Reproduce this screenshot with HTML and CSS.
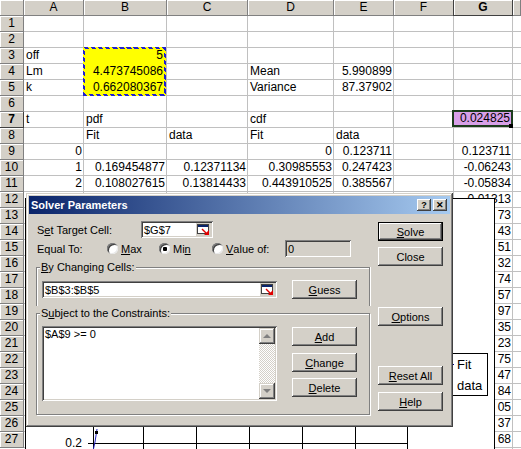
FILE: index.html
```html
<!DOCTYPE html>
<html lang="en">
<head>
    <meta charset="UTF-8" />
    <meta name="viewport" content="width=device-width, initial-scale=1.0" />
    <title>Solver Parameters</title>
    <link rel="stylesheet" href="styles.css">
</head>
<body>
<div class="page">
    <div class="sheet">
        <div class="ch"></div><div class="ch">A</div><div class="ch">B</div><div class="ch">C</div><div class="ch">D</div><div class="ch">E</div><div class="ch">F</div><div class="ch cur">G</div><div class="ch"></div>

        <div class="rh">1</div>
        <div class="rh">2</div>
        <div class="rh">3</div><div class="cell a">off</div>
        <div class="range">
            <div class="v">5</div>
            <div class="v">4.473745086</div>
            <div class="v">0.662080367</div>
        </div>
        <div class="rh">4</div><div class="cell a">Lm</div><div class="cell d">Mean</div><div class="cell e num">5.990899</div>
        <div class="rh">5</div><div class="cell a">k</div><div class="cell d">Variance</div><div class="cell e num">87.37902</div>
        <div class="rh">6</div>
        <div class="rh cur">7</div><div class="cell a">t</div><div class="cell b">pdf</div><div class="cell d">cdf</div><div class="cell g num active">0.024825</div>
        <div class="rh">8</div><div class="cell b">Fit</div><div class="cell c">data</div><div class="cell d">Fit</div><div class="cell e">data</div>
        <div class="rh">9</div><div class="cell a num">0</div><div class="cell d num">0</div><div class="cell e num">0.123711</div><div class="cell g num">0.123711</div>
        <div class="rh">10</div><div class="cell a num">1</div><div class="cell b num">0.169454877</div><div class="cell c num">0.12371134</div><div class="cell d num">0.30985553</div><div class="cell e num">0.247423</div><div class="cell g num">-0.06243</div>
        <div class="rh">11</div><div class="cell a num">2</div><div class="cell b num">0.108027615</div><div class="cell c num">0.13814433</div><div class="cell d num">0.443910525</div><div class="cell e num">0.385567</div><div class="cell g num">-0.05834</div>
        <div class="rh">12</div><div class="cell g num">-0.01313</div>
        <!-- only the tail of these values shows past the chart -->
        <div class="rh">13</div><div class="cell g num">73</div>
        <div class="rh">14</div><div class="cell g num">43</div>
        <div class="rh">15</div><div class="cell g num">51</div>
        <div class="rh">16</div><div class="cell g num">32</div>
        <div class="rh">17</div><div class="cell g num">74</div>
        <div class="rh">18</div><div class="cell g num">57</div>
        <div class="rh">19</div><div class="cell g num">97</div>
        <div class="rh">20</div><div class="cell g num">35</div>
        <div class="rh">21</div><div class="cell g num">23</div>
        <div class="rh">22</div><div class="cell g num">75</div>
        <div class="rh">23</div><div class="cell g num">47</div>
        <div class="rh">24</div><div class="cell g num">84</div>
        <div class="rh">25</div><div class="cell g num">05</div>
        <div class="rh">26</div><div class="cell g num">37</div>
        <div class="rh">27</div><div class="cell g num">68</div>
    </div>

    <!-- embedded chart, mostly hidden behind the dialog -->
    <div class="chart">
        <svg class="plot" width="468" height="260" viewBox="0 0 468 260">
            <g stroke="#000" stroke-width="1" shape-rendering="crispEdges">
                <line x1="67.5" y1="0" x2="67.5" y2="260" />
                <line x1="117.5" y1="0" x2="117.5" y2="260" />
                <line x1="170.5" y1="0" x2="170.5" y2="260" />
                <line x1="223.5" y1="0" x2="223.5" y2="260" />
                <line x1="276.5" y1="0" x2="276.5" y2="260" />
                <line x1="329.5" y1="0" x2="329.5" y2="260" />
                <line x1="381.5" y1="0" x2="381.5" y2="260" />
                <line x1="62" y1="244.5" x2="382" y2="244.5" />
            </g>
            <text class="tick" x="56" y="248" text-anchor="end">0.2</text>
            <polyline points="67,252 69,243 71,230" fill="none" stroke="#2020c0" stroke-width="1" />
            <rect x="69" y="232" width="3" height="3" fill="#000" />
        </svg>
        <div class="legend">
            <div class="li"><span class="swatch fit"></span>Fit</div>
            <div class="li"><span class="swatch none"></span>data</div>
        </div>
    </div>

    <div class="dialog">
        <div class="titlebar">
            <span class="title">Solver Parameters</span>
            <div class="tbtns">
                <span class="tbtn">?</span>
                <span class="tbtn">&#x2715;</span>
            </div>
        </div>
        <div class="dbody">
            <div class="dleft">
                <div class="frow">
                    <span class="lbl target-lbl">S<u>e</u>t Target Cell:</span>
                    <div class="field target">
                        <span>$G$7</span>
                        <span class="refbtn">
                            <svg width="14" height="12" viewBox="0 0 14 12">
                                <rect x="0.5" y="0.5" width="11" height="9" fill="#fff" stroke="#404040" />
                                <rect x="1" y="1" width="10" height="2" fill="#0a246a" />
                                <path d="M5 5 L10 10" stroke="#e00000" stroke-width="1.4" />
                                <path d="M7 11 L12 11 L12 6 Z" fill="#e00000" />
                            </svg>
                        </span>
                    </div>
                </div>
                <div class="frow r2">
                    <span class="lbl eq-lbl">Equal To:</span>
                    <span class="opt o1"><span class="rb"></span><u>M</u>ax</span>
                    <span class="opt o2"><span class="rb on"></span>Mi<u>n</u></span>
                    <span class="opt o3"><span class="rb"></span><u>V</u>alue of:</span>
                    <div class="field off valbox">0</div>
                </div>
                <fieldset class="grp g1">
                    <legend><u>B</u>y Changing Cells:</legend>
                    <div class="grow">
                        <div class="field changing">
                            <span>$B$3:$B$5</span>
                            <span class="refbtn">
                                <svg width="14" height="12" viewBox="0 0 14 12">
                                    <rect x="0.5" y="0.5" width="11" height="9" fill="#fff" stroke="#404040" />
                                    <rect x="1" y="1" width="10" height="2" fill="#0a246a" />
                                    <path d="M5 5 L10 10" stroke="#e00000" stroke-width="1.4" />
                                    <path d="M7 11 L12 11 L12 6 Z" fill="#e00000" />
                                </svg>
                            </span>
                        </div>
                        <button class="btn"><u>G</u>uess</button>
                    </div>
                </fieldset>
                <fieldset class="grp g2">
                    <legend>S<u>u</u>bject to the Constraints:</legend>
                    <div class="grow top">
                        <div class="listbox">
                            <div class="items">$A$9 &gt;= 0</div>
                            <div class="vscroll">
                                <span class="sbtn"><span class="arr up"></span></span>
                                <span class="track"></span>
                                <span class="sbtn"><span class="arr down"></span></span>
                            </div>
                        </div>
                        <div class="bcol">
                            <button class="btn add"><u>A</u>dd</button>
                            <button class="btn change"><u>C</u>hange</button>
                            <button class="btn delete"><u>D</u>elete</button>
                        </div>
                    </div>
                </fieldset>
            </div>
            <div class="dright">
                <button class="btn dflt solve"><u>S</u>olve</button>
                <button class="btn closeb">Close</button>
                <button class="btn options"><u>O</u>ptions</button>
                <button class="btn reset"><u>R</u>eset All</button>
                <button class="btn help"><u>H</u>elp</button>
            </div>
        </div>
    </div>
</div>
</body>
</html>
```

FILE: styles.css
```css
* {
    margin: 0;
    padding: 0;
    box-sizing: border-box;
}

body {
    background: #fff;
    font-family: "Liberation Sans", Arial, sans-serif;
    color: #000;
}

.page {
    position: relative;
    width: 521px;
    height: 449px;
    overflow: hidden;
}

/* ---------- worksheet ---------- */

.sheet {
    display: grid;
    grid-template-columns: 24px 60px 83px 81px 86px 60px 60px 59px 8px;
    grid-auto-rows: 16px;
    height: 449px;
    font-size: 12px;
    line-height: 15px;
    background-color: #fff;
    background-image:
        linear-gradient(to right,
            transparent 0 83px, #c0c0c0 83px 84px,
            transparent 84px 166px, #c0c0c0 166px 167px,
            transparent 167px 247px, #c0c0c0 247px 248px,
            transparent 248px 333px, #c0c0c0 333px 334px,
            transparent 334px 393px, #c0c0c0 393px 394px,
            transparent 394px 453px, #c0c0c0 453px 454px,
            transparent 454px 512px, #c0c0c0 512px 513px,
            transparent 513px),
        repeating-linear-gradient(to bottom, transparent 0 15px, #c0c0c0 15px 16px);
}

.ch,
.rh {
    background: #d4d0c8;
    border-right: 1px solid #808080;
    border-bottom: 1px solid #808080;
    box-shadow: inset 1px 1px #fff;
    text-align: center;
    color: #000;
}

.rh {
    grid-column: 1;
}

.ch.cur,
.rh.cur {
    font-weight: bold;
    border-color: #404040;
    box-shadow: inset 1px 1px #fff, -1px 0 #404040;
}

.cell {
    padding: 0 2px 0 2px;
    white-space: nowrap;
    overflow: visible;
}

.num {
    text-align: right;
}

.a { grid-column: 2; }
.b { grid-column: 3; }
.c { grid-column: 4; }
.d { grid-column: 5; }
.e { grid-column: 6; }
.g { grid-column: 8; }

/* copied range with marching ants */
.range {
    grid-column: 3;
    grid-row: span 3;
    margin: -1px 1px 0 -1px;
    background: #ffff00;
    border: 2px solid #2020d0;
    border-image: repeating-linear-gradient(45deg, #2020d0 0 3px, #ffff00 3px 5px) 2;
    text-align: right;
    padding-right: 1px;
}

.range .v {
    height: 16px;
    line-height: 15px;
}

.range .v:first-child {
    margin-top: -1px;
}

.active {
    position: relative;
    margin: -2px 0 1px -2px;
    background: #d8a0e8;
    border: 2px solid #1c3c1c;
    padding: 0 1px 0 0;
    line-height: 13px;
}

.active::after {
    content: "";
    position: absolute;
    right: -2px;
    bottom: -3px;
    width: 4px;
    height: 4px;
    background: #000;
}

/* ---------- chart ---------- */

.chart {
    position: absolute;
    left: 25px;
    top: 198px;
    width: 470px;
    height: 270px;
    border: 1px solid #000;
    background: #fff;
    z-index: 1;
}

.plot {
    display: block;
}

.plot .tick {
    font-family: "Liberation Sans", Arial, sans-serif;
    font-size: 12px;
    fill: #000;
}

.legend {
    position: absolute;
    left: 415px;
    top: 154px;
    width: 47px;
    height: 43px;
    border: 1px solid #000;
    background: #fff;
    font-size: 13px;
}

.legend .li {
    display: flex;
    align-items: center;
    height: 21px;
}

.swatch {
    width: 9px;
    height: 1px;
    margin: 0 3px;
    background: #000080;
}

.swatch.none {
    background: transparent;
}

/* ---------- solver dialog ---------- */

.dialog {
    position: absolute;
    left: 26px;
    top: 193px;
    width: 427px;
    height: 234px;
    padding: 3px;
    background: #d4d0c8;
    box-shadow: inset -1px -1px #404040, inset 1px 1px #d4d0c8, inset -2px -2px #808080, inset 2px 2px #fff;
    font-size: 11px;
    z-index: 2;
}

.titlebar {
    height: 18px;
    display: flex;
    align-items: center;
    justify-content: space-between;
    padding: 0 3px 0 2px;
    background: linear-gradient(to right, #0a246a, #a6caf0);
    color: #fff;
    font-weight: bold;
}

.tbtns {
    display: flex;
    gap: 2px;
}

.tbtn {
    width: 14px;
    height: 12px;
    background: #d4d0c8;
    box-shadow: inset -1px -1px #404040, inset 1px 1px #fff, inset -2px -2px #808080;
    color: #000;
    font-size: 9px;
    line-height: 12px;
    text-align: center;
}

.dbody {
    display: flex;
    gap: 8px;
    padding: 7px 7px 0 7px;
}

.dleft {
    width: 334px;
}

.dright {
    width: 65px;
    display: flex;
    flex-direction: column;
}

.frow {
    display: flex;
    align-items: center;
    height: 17px;
}

.r2 {
    margin-top: 2px;
}

.lbl {
    padding-left: 1px;
}

.target-lbl {
    width: 105px;
}

.eq-lbl {
    width: 71px;
}

.opt {
    display: flex;
    align-items: center;
}

.o1 { width: 52px; }
.o2 { width: 53px; }
.o3 { width: 73px; }

.rb {
    width: 11px;
    height: 11px;
    margin-right: 3px;
    border-radius: 50%;
    background: #fff;
    box-shadow: inset 1px 1px #808080, inset -1px -1px #e8e8e8, inset 2px 2px #404040;
}

.rb.on {
    background: radial-gradient(circle at 6px 6px, #000 0 2px, #fff 2.5px);
}

.field {
    height: 17px;
    display: flex;
    align-items: center;
    justify-content: space-between;
    padding: 0 2px 0 3px;
    background: #fff;
    box-shadow: inset 1px 1px #808080, inset -1px -1px #fff, inset 2px 2px #404040, inset -2px -2px #d4d0c8;
}

.field.off {
    background: #d4d0c8;
}

.target {
    width: 72px;
}

.valbox {
    width: 66px;
}

.refbtn {
    display: flex;
    width: 15px;
    height: 13px;
    align-items: center;
    justify-content: center;
    background: #d4d0c8;
}

.grp {
    border: 1px solid #808080;
    box-shadow: 1px 1px 0 #fff, inset 1px 1px 0 #fff;
    padding: 6px 12px 6px 5px;
}

.g1 {
    margin-top: 3px;
    border-bottom: 0;
    padding-bottom: 7px;
    box-shadow: 1px 0 0 #fff, inset 1px 1px 0 #fff;
}

.g2 {
    padding-bottom: 13px;
}

.grp legend {
    margin-left: -2px;
    padding: 0 1px;
    line-height: 14px;
    background: #d4d0c8;
}

.grow {
    display: flex;
    align-items: center;
    gap: 15px;
}

.grow.top {
    align-items: flex-start;
}

.changing {
    width: 235px;
}

.listbox {
    width: 235px;
    height: 75px;
    display: flex;
    padding: 2px;
    background: #fff;
    box-shadow: inset 1px 1px #808080, inset -1px -1px #fff, inset 2px 2px #404040, inset -2px -2px #d4d0c8;
}

.items {
    flex: 1;
    padding: 0 1px;
    line-height: 12px;
}

.vscroll {
    width: 16px;
    display: flex;
    flex-direction: column;
}

.sbtn {
    height: 16px;
    display: flex;
    align-items: center;
    justify-content: center;
    background: #d4d0c8;
    box-shadow: inset -1px -1px #404040, inset 1px 1px #d4d0c8, inset -2px -2px #808080, inset 2px 2px #fff;
}

.track {
    flex: 1;
    background: repeating-conic-gradient(#d4d0c8 0 25%, #fff 0 50%) 0 0 / 2px 2px;
}

.arr {
    width: 0;
    height: 0;
    border-left: 4px solid transparent;
    border-right: 4px solid transparent;
}

.arr.up {
    border-bottom: 4px solid #808080;
}

.arr.down {
    border-top: 4px solid #808080;
}

.bcol {
    display: flex;
    flex-direction: column;
}

.btn {
    width: 65px;
    height: 19px;
    border: 0;
    background: #d4d0c8;
    box-shadow: inset -1px -1px #404040, inset 1px 1px #fff, inset -2px -2px #808080, inset 2px 2px #d4d0c8;
    font-family: inherit;
    font-size: 11px;
    color: #000;
    text-align: center;
}

.btn.dflt {
    box-shadow: inset 0 0 0 1px #000, inset -2px -2px #404040, inset 2px 2px #fff, inset -3px -3px #808080;
}

.add { margin-top: 1px; }
.change { margin-top: 7px; }
.delete { margin-top: 6px; }

.solve { margin-top: 1px; }
.closeb { margin-top: 6px; }
.options { margin-top: 41px; }
.reset { margin-top: 40px; }
.help { margin-top: 7px; }
```
